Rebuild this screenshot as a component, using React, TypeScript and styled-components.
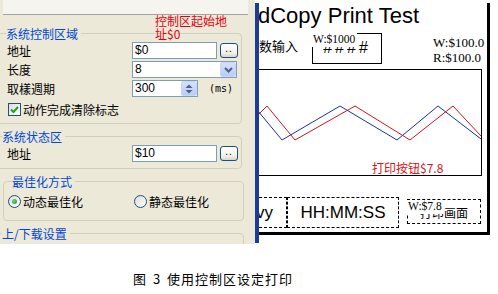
import React from 'react';
import styled, { createGlobalStyle } from 'styled-components';

const GlobalStyle = createGlobalStyle`
  html, body {
    margin: 0;
    padding: 0;
    background: #fff;
  }
  body {
    font-family: "Noto Sans CJK SC", sans-serif;
    color: #000;
  }
`;

const Page = styled.div`
  width: 498px;
  height: 294px;
  overflow: hidden;
  background: #fff;
`;

const Shot = styled.div`
  display: flex;
  align-items: flex-start;
  height: 244px;
`;

/* ---------- left settings panel ---------- */

const Panel = styled.div`
  position: relative;
  width: 255px;
  height: 244px;
  flex-shrink: 0;
  background: #ece9d8;
  overflow: hidden;
  display: flex;
  flex-direction: column;
`;

const TopBand = styled.div`
  height: 14px;
  flex-shrink: 0;
  margin: 0 7px 0 3px;
  background: #f5f4ee;
  border-bottom: 1px solid #a3a3a3;
`;

const Note = styled.div`
  position: absolute;
  left: 155px;
  top: 14px;
  width: 74px;
  color: #e5000f;
  font-size: 12px;
  line-height: 13px;
`;

const Group = styled.fieldset<{ $top: number; $left: number; $right: number }>`
  margin: ${p => p.$top}px ${p => p.$right}px 0 ${p => p.$left}px;
  padding: 0 0 0 2px;
  border: 1px solid #d0d0bf;
  border-radius: 4px;
  min-width: 0;
  flex-shrink: 0;
`;

const Legend = styled.legend<{ $indent: number }>`
  margin-left: ${p => p.$indent}px;
  padding: 0 3px 0 0;
  color: #0046d5;
  font-size: 12px;
  line-height: 13px;
`;

const Body = styled.div<{ $pad: string; $gap?: number; $min?: number }>`
  display: flex;
  flex-direction: column;
  gap: ${p => p.$gap ?? 2}px;
  padding: ${p => p.$pad};
  min-height: ${p => p.$min ?? 0}px;
`;

const Row = styled.div`
  display: grid;
  grid-template-columns: 125px auto;
  align-items: center;
  height: 17px;
  font-size: 12px;
`;

const Field = styled.div`
  display: flex;
  align-items: center;
`;

const Box = styled.div<{ $w: number }>`
  position: relative;
  width: ${p => p.$w}px;
  height: 17px;
  box-sizing: border-box;
  border: 1px solid #7f9db9;
  background: #fff;
  padding-left: 2px;
  font: 12px/15px "Liberation Sans", Arial, sans-serif;
  display: flex;
  align-items: center;
  justify-content: space-between;
`;

const DotsButton = styled.div`
  width: 18px;
  height: 15px;
  margin-left: 3px;
  box-sizing: border-box;
  border: 1px solid #1c4f80;
  border-radius: 3px;
  background: linear-gradient(#ffffff, #f1efe6 70%, #d9d4c6);
  font: 10px/9px "Liberation Sans", Arial, sans-serif;
  letter-spacing: 1px;
  text-align: center;
  color: #000;
`;

const ArrowButton = styled.div`
  width: 16px;
  height: 15px;
  box-sizing: border-box;
  border-radius: 2px;
  background: linear-gradient(#d4e0fd, #b9cdf7);
  border: 1px solid #c8d6f8;
  display: flex;
  align-items: center;
  justify-content: center;
`;

const Unit = styled.span`
  margin-left: 11px;
  font: 10px "DejaVu Sans Mono", monospace;
`;

const CheckRow = styled.div`
  display: flex;
  align-items: center;
  gap: 2px;
  height: 13px;
  margin-top: 4px;
  padding-left: 1px;
  font-size: 12px;
`;

const CheckMark = styled.div`
  width: 13px;
  height: 13px;
  box-sizing: border-box;
  border: 1px solid #1c5180;
  background: linear-gradient(135deg, #dcdcd7, #fff);
  display: flex;
  align-items: center;
  justify-content: center;
`;

const RadioRow = styled.div`
  display: grid;
  grid-template-columns: 126px auto;
  height: 13px;
  padding-left: 1px;
  font-size: 12px;
`;

const RadioItem = styled.div`
  display: flex;
  align-items: center;
  gap: 2px;
`;

const RadioDot = styled.div<{ $on?: boolean }>`
  width: 13px;
  height: 13px;
  box-sizing: border-box;
  border-radius: 50%;
  border: 1px solid #1c5180;
  background: linear-gradient(135deg, #dcdcd7, #fff);
  display: flex;
  align-items: center;
  justify-content: center;
  &::after {
    content: '';
    width: 5px;
    height: 5px;
    border-radius: 50%;
    background: ${p => (p.$on ? 'radial-gradient(circle at 35% 35%, #6fd06f, #1f9a1f)' : 'transparent')};
  }
`;

/* ---------- print preview canvas ---------- */

const BlueBar = styled.div`
  width: 4px;
  height: 240px;
  margin-top: 3px;
  flex-shrink: 0;
  background: #1d3c96;
`;

const Canvas = styled.div`
  width: 231px;
  height: 232px;
  margin-top: 3px;
  box-sizing: border-box;
  border-right: 3px solid #000;
  border-bottom: 3px solid #000;
  background: #fff;
  overflow: hidden;
  display: flex;
  flex-direction: column;
`;

const Title = styled.div`
  margin-left: -1px;
  font: 22px/25px "Liberation Sans", Arial, sans-serif;
  white-space: nowrap;
`;

const ParamRow = styled.div`
  display: flex;
  align-items: flex-start;
  height: 31px;
  margin-top: 5px;
`;

const ParamLabel = styled.div`
  margin-top: 4px;
  width: 38px;
  font-size: 13px;
  line-height: 17px;
  white-space: nowrap;
`;

const ValueBox = styled.div`
  position: relative;
  width: 70px;
  height: 31px;
  margin-left: 15px;
  box-sizing: border-box;
  border: 1px solid #000;
  padding-top: 5px;
  text-align: center;
  font: 16px/18px "Liberation Sans", Arial, sans-serif;
  letter-spacing: 3px;
`;

const Tag = styled.span<{ $top: number }>`
  position: absolute;
  left: -1px;
  top: ${p => p.$top}px;
  padding: 0 2px 2px 1px;
  background: #fff;
  font: 11.5px/12px "Liberation Serif", "Times New Roman", serif;
  letter-spacing: 0;
  white-space: nowrap;
`;

const ReadValues = styled.div`
  margin: 2px 0 0 51px;
  font: 13px/15px "Liberation Serif", "Times New Roman", serif;
  white-space: nowrap;
`;

const Chart = styled.div`
  width: 225px;
  height: 107px;
  margin: 5px 0 0 -2px;
  box-sizing: border-box;
  border: 1px solid #000;
  display: flex;
  flex-direction: column;
`;

const ChartNote = styled.div`
  padding-left: 114px;
  color: #d8141c;
  font-size: 12px;
  line-height: 14px;
  white-space: nowrap;
`;

const BottomRow = styled.div`
  display: flex;
  align-items: flex-start;
  margin-top: 21px;
`;

const DashBox = styled.div<{ $w: number; $h: number; $ml: number; $mt?: number; $align?: string; $pr?: number }>`
  position: relative;
  flex-shrink: 0;
  width: ${p => p.$w}px;
  height: ${p => p.$h}px;
  margin: ${p => p.$mt ?? 0}px 0 0 ${p => p.$ml}px;
  padding-right: ${p => p.$pr ?? 0}px;
  box-sizing: border-box;
  border: 1px dashed #000;
  display: flex;
  align-items: center;
  justify-content: ${p => p.$align ?? 'center'};
  font: 17px/19px "Liberation Sans", Arial, sans-serif;
`;

const SmallCjk = styled.span`
  margin-top: 2px;
  font-size: 12px;
  line-height: 16px;
  font-family: "Noto Sans CJK SC", sans-serif;
`;

const Caption = styled.div`
  margin-top: 26px;
  padding-left: 133px;
  font-size: 13px;
  line-height: 17px;
  letter-spacing: 1px;
  word-spacing: 2px;
  white-space: nowrap;
`;

const Chevron = () => (
  <svg width="9" height="6" viewBox="0 0 9 6">
    <polyline points="1,1 4.5,4.5 8,1" fill="none" stroke="#4d6185" strokeWidth="2" />
  </svg>
);

const SpinArrows = () => (
  <svg width="8" height="10" viewBox="0 0 8 10">
    <polygon points="4,0.5 7.5,4 0.5,4" fill="#4d6185" />
    <polygon points="4,9.5 7.5,6 0.5,6" fill="#4d6185" />
  </svg>
);

const Tick = () => (
  <svg width="9" height="8" viewBox="0 0 9 8">
    <polyline points="1,3.5 3.5,6 8,1" fill="none" stroke="#21a121" strokeWidth="2" />
  </svg>
);

const red = '0,45 9,36 37,70 97,36 152,70 195,36 223,66';
const blue = '0,41 24,70 82,36 139,70 180,36 223,69';

export default function App() {
  return (
    <Page>
      <GlobalStyle />
      <Shot>
        <Panel>
          <TopBand />
          <Note>控制区起始地址$0</Note>

          <Group $top={12} $left={-3} $right={13}>
            <Legend $indent={6}>系统控制区域</Legend>
            <Body $pad="2px 0 7px 7px">
              <Row>
                <span>地址</span>
                <Field>
                  <Box $w={85}>$0</Box>
                  <DotsButton>..</DotsButton>
                </Field>
              </Row>
              <Row>
                <span>长度</span>
                <Field>
                  <Box $w={105}>
                    8
                    <ArrowButton>
                      <Chevron />
                    </ArrowButton>
                  </Box>
                </Field>
              </Row>
              <Row>
                <span>取樣週期</span>
                <Field>
                  <Box $w={66}>
                    300
                    <ArrowButton>
                      <SpinArrows />
                    </ArrowButton>
                  </Box>
                  <Unit>(ms)</Unit>
                </Field>
              </Row>
              <CheckRow>
                <CheckMark>
                  <Tick />
                </CheckMark>
                动作完成清除标志
              </CheckRow>
            </Body>
          </Group>

          <Group $top={6} $left={-3} $right={13}>
            <Legend $indent={2}>系统状态区</Legend>
            <Body $pad="2px 0 6px 7px">
              <Row>
                <span>地址</span>
                <Field>
                  <Box $w={85}>$10</Box>
                  <DotsButton>..</DotsButton>
                </Field>
              </Row>
            </Body>
          </Group>

          <Group $top={6} $left={3} $right={11}>
            <Legend $indent={6}>最佳化方式</Legend>
            <Body $pad="5px 0 14px 1px">
              <RadioRow>
                <RadioItem>
                  <RadioDot $on />
                  动态最佳化
                </RadioItem>
                <RadioItem>
                  <RadioDot />
                  静态最佳化
                </RadioItem>
              </RadioRow>
            </Body>
          </Group>

          <Group $top={6} $left={-3} $right={11}>
            <Legend $indent={2}>上/下载设置</Legend>
            <Body $pad="0" $min={30} />
          </Group>
        </Panel>

        <BlueBar />

        <Canvas>
          <Title>dCopy Print Test</Title>
          <ParamRow>
            <ParamLabel>数输入</ParamLabel>
            <ValueBox>
              ####
              <Tag $top={-1}>W:$1000</Tag>
            </ValueBox>
            <ReadValues>
              W:$100.0
              <br />
              R:$100.0
            </ReadValues>
          </ParamRow>
          <Chart>
            <svg width="223" height="91" viewBox="0 0 223 91">
              <polyline points={blue} fill="none" stroke="#1c2fa8" strokeWidth="1" />
              <polyline points={red} fill="none" stroke="#d8141c" strokeWidth="1" />
            </svg>
            <ChartNote>打印按钮$7.8</ChartNote>
          </Chart>
          <BottomRow>
            <DashBox $w={88} $h={31} $ml={-60} $align="flex-end" $pr={13}>
              vy
            </DashBox>
            <DashBox $w={112} $h={31} $ml={0}>
              HH:MM:SS
            </DashBox>
            <DashBox $w={74} $h={25} $ml={8} $mt={2}>
              <SmallCjk>打印画面</SmallCjk>
              <Tag $top={0}>W:$7.8</Tag>
            </DashBox>
          </BottomRow>
        </Canvas>
      </Shot>
      <Caption>图 3 使用控制区设定打印</Caption>
    </Page>
  );
}
